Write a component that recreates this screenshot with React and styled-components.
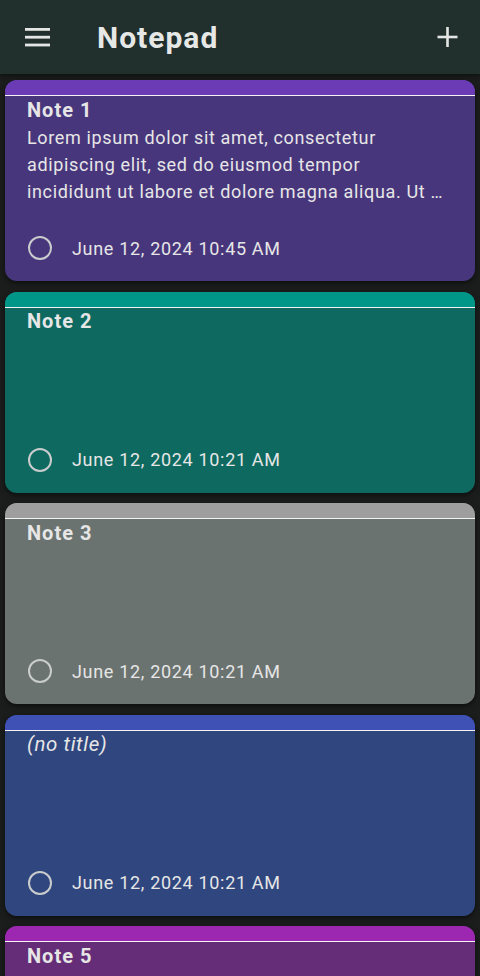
import React from "react";
import styled, { createGlobalStyle } from "styled-components";

const Global = createGlobalStyle`
  html, body { margin: 0; padding: 0; background: #1b1d1d; }
  body { font-family: Roboto, "Noto Sans", sans-serif; overflow: hidden; }
  * { box-sizing: border-box; }
`;

const Page = styled.div`
  width: 480px;
  height: 976px;
  background: #1b1d1d;
  display: flex;
  flex-direction: column;
  overflow: hidden;
`;

const Header = styled.header`
  height: 74px;
  flex: none;
  background: #212f2d;
  display: flex;
  align-items: center;
  padding: 0 21px 0 25px;
  box-shadow: 0 2px 4px rgba(0, 0, 0, 0.4);
`;

const IconButton = styled.div`
  width: ${(p) => p.$w || 26}px;
  height: 26px;
  display: flex;
  align-items: center;
  justify-content: center;
  color: #e4e6e4;
`;

const Title = styled.h1`
  margin: 0 0 0 46px;
  flex: 1;
  font-size: 30px;
  font-weight: 700;
  color: #e6e8e6;
  letter-spacing: 1px;
`;

const List = styled.div`
  display: flex;
  flex-direction: column;
  gap: 10.5px;
  padding: 6px 5px 0;
`;

const Card = styled.div`
  height: 201px;
  flex: none;
  border-radius: 12px;
  overflow: hidden;
  background: ${(p) => p.$body};
  display: flex;
  flex-direction: column;
  box-shadow: 0 2px 5px rgba(0, 0, 0, 0.55);
`;

const Strip = styled.div`
  height: 16px;
  flex: none;
  background: ${(p) => p.$top};
  border-bottom: 1.5px solid #f4f4f4;
`;

const Body = styled.div`
  flex: 1;
  display: flex;
  flex-direction: column;
  padding: 1.5px 31px 0 22px;
  color: #e6e6e6;
`;

const NoteTitle = styled.div`
  font-size: ${(p) => (p.$empty ? "20.5px" : "20px")};
  font-weight: ${(p) => (p.$empty ? 400 : 700)};
  font-style: ${(p) => (p.$empty ? "italic" : "normal")};
  line-height: 24px;
  letter-spacing: ${(p) => (p.$empty ? "0.6px" : "1px")};
`;

const NoteText = styled.div`
  margin-top: 2px;
  font-size: 18px;
  line-height: 27px;
  letter-spacing: 0.65px;
  display: -webkit-box;
  -webkit-line-clamp: 3;
  -webkit-box-orient: vertical;
  overflow: hidden;
`;

const Footer = styled.div`
  margin-top: auto;
  height: 48px;
  margin-bottom: 9px;
  display: flex;
  align-items: center;
  gap: 20px;
  margin-left: 1px;
`;

const Circle = styled.div`
  width: 24px;
  height: 24px;
  border-radius: 50%;
  border: 2.5px solid #c9cccc;
  flex: none;
`;

const DateText = styled.span`
  font-size: 18px;
  letter-spacing: 0.68px;
  color: #e6e6e6;
`;

const notes = [
  {
    title: "Note 1",
    text:
      "Lorem ipsum dolor sit amet, consectetur adipiscing elit, sed do eiusmod tempor incididunt ut labore et dolore magna aliqua. Ut …",
    date: "June 12, 2024 10:45 AM",
    top: "#6a3bb5",
    body: "#48367c",
  },
  { title: "Note 2", date: "June 12, 2024 10:21 AM", top: "#009688", body: "#0e6a60" },
  { title: "Note 3", date: "June 12, 2024 10:21 AM", top: "#9e9e9e", body: "#6b7370" },
  { title: "", date: "June 12, 2024 10:21 AM", top: "#3f51b5", body: "#30467e" },
  { title: "Note 5", date: "June 12, 2024 10:21 AM", top: "#9c27b0", body: "#652d77" },
];

export default function App() {
  return (
    <Page>
      <Global />
      <Header>
        <IconButton>
          <svg width="26" height="22" viewBox="0 0 26 22">
            <rect x="0" y="2" width="25" height="2.8" fill="currentColor" />
            <rect x="0" y="9.8" width="25" height="2.8" fill="currentColor" />
            <rect x="0" y="17.6" width="25" height="2.8" fill="currentColor" />
          </svg>
        </IconButton>
        <Title>Notepad</Title>
        <IconButton $w={22}>
          <svg width="22" height="22" viewBox="0 0 22 22">
            <rect x="0.5" y="9.7" width="20" height="2.6" fill="currentColor" />
            <rect x="9.2" y="1" width="2.6" height="20" fill="currentColor" />
          </svg>
        </IconButton>
      </Header>
      <List>
        {notes.map((n, i) => (
          <Card key={i} $body={n.body}>
            <Strip $top={n.top} />
            <Body>
              <NoteTitle $empty={!n.title}>{n.title || "(no title)"}</NoteTitle>
              {n.text && <NoteText>{n.text}</NoteText>}
              <Footer>
                <Circle />
                <DateText>{n.date}</DateText>
              </Footer>
            </Body>
          </Card>
        ))}
      </List>
    </Page>
  );
}
